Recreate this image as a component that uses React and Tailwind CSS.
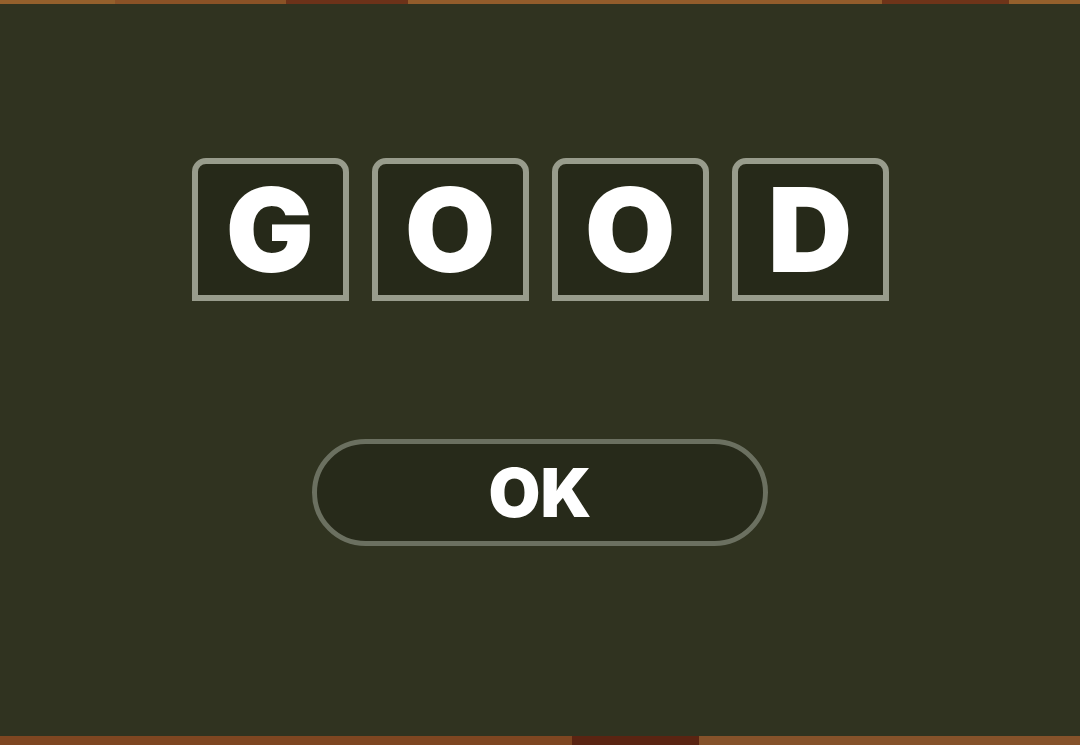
import React from 'react';

const letters = ['G', 'O', 'O', 'D'];

const LetterTile = ({ letter }) => (
  <div className="w-[157px] h-[143px] rounded-t-[14px] border-[6px] border-[#989c8c] bg-[#262919] flex items-center justify-center">
    <span
      className="text-white font-black text-[117px] leading-none"
      style={{ fontFamily: 'Inter, "Liberation Sans", sans-serif' }}
    >
      {letter}
    </span>
  </div>
);

const App = () => {
  return (
    <div className="w-[1080px] h-[745px] flex flex-col overflow-hidden">
      {/* top wood strip */}
      <div className="h-[4px] flex">
        <div className="w-[115px] bg-[#94602c]" />
        <div className="w-[171px] bg-[#8a5226]" />
        <div className="w-[122px] bg-[#6c3219]" />
        <div className="w-[474px] bg-[#925c2b]" />
        <div className="w-[127px] bg-[#6e3419]" />
        <div className="flex-1 bg-[#94602c]" />
      </div>

      <div className="flex-1 bg-[#303320] flex flex-col items-center pt-[154px]">
        <div className="flex gap-[23px]">
          {letters.map((l, i) => (
            <LetterTile key={i} letter={l} />
          ))}
        </div>

        <button className="mt-[138px] w-[456px] h-[107px] rounded-full border-[5px] border-[#6b7060] bg-[#272a1a] flex items-center justify-center">
          <span
            className="text-white font-black text-[67px] leading-none"
            style={{ fontFamily: 'Inter, "Liberation Sans", sans-serif' }}
          >
            OK
          </span>
        </button>
      </div>

      {/* bottom wood strip */}
      <div className="h-[9px] flex">
        <div className="w-[572px] bg-[#7e4621]" />
        <div className="w-[127px] bg-[#5a2412]" />
        <div className="flex-1 bg-[#85522a]" />
      </div>
    </div>
  );
};

export default App;
